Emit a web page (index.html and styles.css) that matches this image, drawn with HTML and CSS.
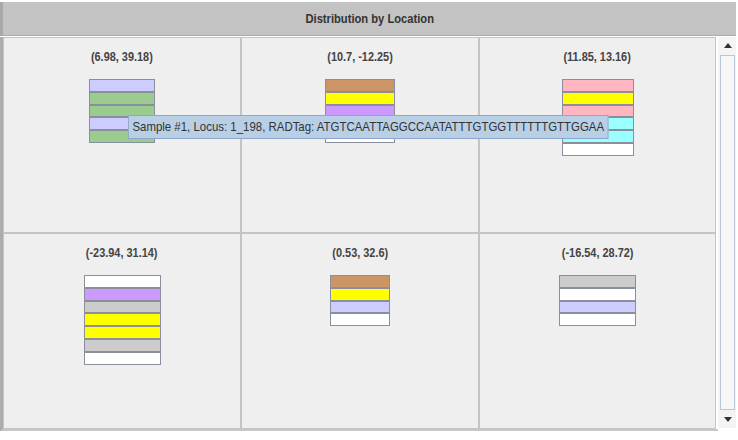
FILE: index.html
```html
<!DOCTYPE html>
<html lang="en">
<head>
    <meta charset="UTF-8">
    <title>Distribution by Location</title>
    <link rel="stylesheet" href="styles.css">
</head>
<body>
    <div class="panel">
        <div class="title-bar"><span class="narrow">Distribution by Location</span></div>

        <div class="content">
            <!-- one cell per sampling location, bars stacked by sample -->
            <div class="grid">
                <div class="cell">
                    <div class="coords">(6.98, 39.18)</div>
                    <div class="stack" style="width:66px">
                        <div class="bar lavender"></div>
                        <div class="bar green"></div>
                        <div class="bar green"></div>
                        <div class="bar lavender"></div>
                        <div class="bar green"></div>
                    </div>
                </div>
                <div class="cell">
                    <div class="coords">(10.7, -12.25)</div>
                    <div class="stack" style="width:70px">
                        <div class="bar brown"></div>
                        <div class="bar yellow"></div>
                        <div class="bar purple"></div>
                        <div class="bar white"></div>
                        <div class="bar white"></div>
                    </div>
                </div>
                <div class="cell">
                    <div class="coords">(11.85, 13.16)</div>
                    <div class="stack" style="width:72px">
                        <div class="bar pink"></div>
                        <div class="bar yellow"></div>
                        <div class="bar pink"></div>
                        <div class="bar cyan"></div>
                        <div class="bar cyan"></div>
                        <div class="bar white"></div>
                    </div>
                </div>
                <div class="cell">
                    <div class="coords">(-23.94, 31.14)</div>
                    <div class="stack" style="width:77px">
                        <div class="bar white"></div>
                        <div class="bar purple"></div>
                        <div class="bar gray"></div>
                        <div class="bar yellow"></div>
                        <div class="bar yellow"></div>
                        <div class="bar gray"></div>
                        <div class="bar white"></div>
                    </div>
                </div>
                <div class="cell">
                    <div class="coords">(0.53, 32.6)</div>
                    <div class="stack" style="width:60px">
                        <div class="bar brown"></div>
                        <div class="bar yellow"></div>
                        <div class="bar lavender"></div>
                        <div class="bar white"></div>
                    </div>
                </div>
                <div class="cell">
                    <div class="coords">(-16.54, 28.72)</div>
                    <div class="stack" style="width:77px">
                        <div class="bar gray"></div>
                        <div class="bar white"></div>
                        <div class="bar lavender"></div>
                        <div class="bar white"></div>
                    </div>
                </div>

                <div class="tooltip">Sample #1, Locus: 1_198, RADTag: ATGTCAATTAGGCCAATATTTGTGGTTTTTTGTTGGAA</div>
            </div>

            <div class="scrollbar">
                <div class="arrow up"></div>
                <div class="thumb"></div>
                <div class="arrow down"></div>
            </div>
        </div>
    </div>
</body>
</html>
```

FILE: styles.css
```css
/* panel layout */
body {
    margin: 0;
    background-color: #fff;
    font-family: 'Liberation Sans', Arial, sans-serif;
    color: #3a3a3a;
}

.panel {
    width: 738px;
    height: 440px;
    padding-top: 2px;
    box-sizing: border-box;
}

.title-bar {
    height: 33px;
    line-height: 33px;
    margin-right: 2px;
    background-color: #c3c3c3;
    border-left: 3px solid #a8a8a8;
    border-bottom: 1px solid #a7a9b8;
    text-align: center;
    font-size: 13px;
    font-weight: bold;
    color: #333;
}

/* the swing fonts render tall and narrow */
.narrow {
    display: inline-block;
    transform: scaleX(0.86);
}

.content {
    display: flex;
    padding-top: 1px;
    margin-right: 2px;
}

/* location cells */
.grid {
    position: relative;
    flex: 1;
    display: grid;
    grid-template-columns: 238px 238px 237px;
    grid-template-rows: 196px 196px;
    border-left: 3px solid #adadad;
    border-bottom: 2px solid #c8c8c8;
}

.cell {
    background-color: #efefef;
    border: 1px solid #c4c4c4;
    display: flex;
    flex-direction: column;
    align-items: center;
}

.coords {
    margin-top: 11px;
    height: 15px;
    line-height: 15px;
    font-size: 13px;
    font-weight: bold;
    color: #444;
    transform: scaleX(0.84);
}

.stack {
    margin-top: 15px;
    display: flex;
    flex-direction: column;
}

.bar {
    height: 10.8px;
    border: 1px solid #8b8f9c;
}

.lavender { background-color: #ccccff; }
.green    { background-color: #99cc8e; }
.brown    { background-color: #cc9566; }
.yellow   { background-color: #ffff00; }
.purple   { background-color: #cc99ff; }
.pink     { background-color: #ffb6c1; }
.cyan     { background-color: #99ffff; }
.gray     { background-color: #cccccc; }
.white    { background-color: #ffffff; }

/* hover tooltip over the first row */
.tooltip {
    position: absolute;
    left: 125px;
    top: 78px;
    height: 22px;
    line-height: 22px;
    padding: 0 4px;
    background-color: #b9cfe6;
    border: 1px solid #8ea6c9;
    font-size: 13px;
    color: #333;
    white-space: nowrap;
    transform: scaleX(0.88);
    transform-origin: left center;
}

/* vertical scrollbar */
.scrollbar {
    width: 18px;
    height: 391px;
    display: flex;
    flex-direction: column;
    background-color: #f4f4f4;
}

.arrow {
    height: 18px;
    position: relative;
}

.arrow::after {
    content: '';
    position: absolute;
    left: 6px;
    border-left: 4px solid transparent;
    border-right: 4px solid transparent;
}

.arrow.up::after {
    top: 6px;
    border-bottom: 5px solid #333;
}

.arrow.down::after {
    top: 7px;
    border-top: 5px solid #333;
}

.thumb {
    flex: 1;
    margin: 0 1px 0 2px;
    background-color: #f7f7f7;
    border: 1px solid #b8c6d6;
}
```
